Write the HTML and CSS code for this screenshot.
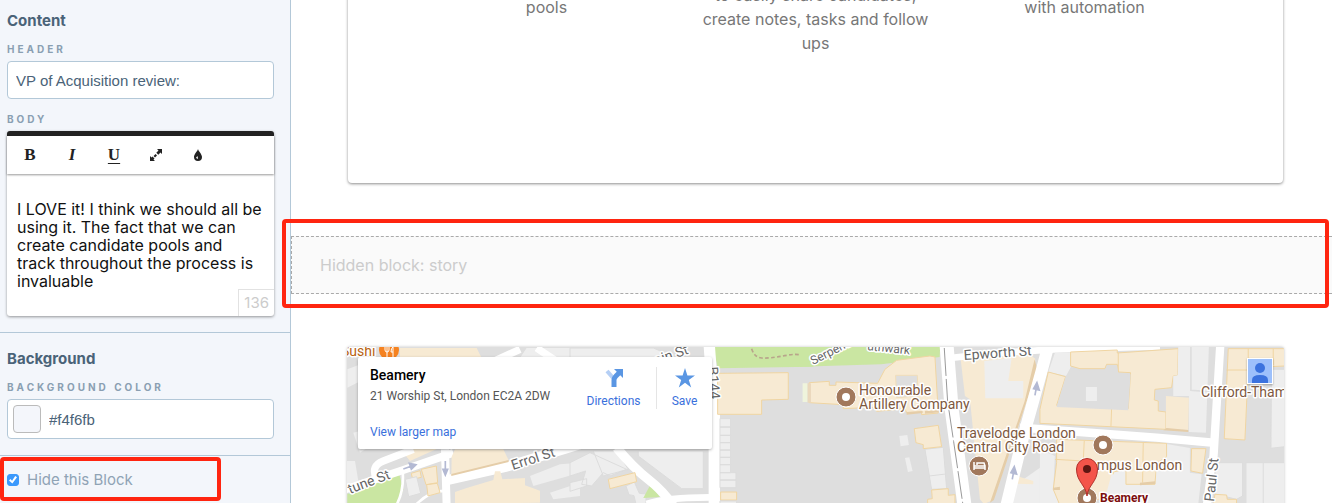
FILE: index.html
```html
<!DOCTYPE html>
<html lang="en">
<head>
    <meta charset="UTF-8">
    <meta name="viewport" content="width=device-width, initial-scale=1.0">
    <title>Page editor</title>
    <link rel="stylesheet" href="styles.css">
</head>
<body>
    <form class="sidebar">
        <section class="panel">
            <h2>Content</h2>
            <label class="field-label" for="header">Header</label>
            <input class="text-input" type="text" id="header" value="VP of Acquisition review:">

            <label class="field-label body-label" for="body">Body</label>
            <div class="editor">
                <div class="toolbar">
                    <button type="button" class="tool bold" aria-label="Bold">B</button>
                    <button type="button" class="tool italic" aria-label="Italic">I</button>
                    <button type="button" class="tool underline" aria-label="Underline">U</button>
                    <button type="button" class="tool" aria-label="Expand">
                        <svg width="14" height="14" viewBox="0 0 14 14">
                            <path d="M8 1h5v5l-1.500-1.500-2.200 2.200-2-2 2.200-2.200z" fill="#222"/>
                            <path d="M6 13H1V8l1.500 1.500 1-1 2 2-1 1z" fill="#222"/>
                            <path d="M5.300 8.700l2-2" stroke="#222" stroke-width="2"/>
                        </svg>
                    </button>
                    <button type="button" class="tool" aria-label="Color">
                        <svg width="14" height="14" viewBox="0 0 14 14">
                            <path d="M7 1c.6 2.500 4 5 4 8.100a4 4 0 0 1-8 0C3 6 6.400 3.500 7 1z" fill="#222"/>
                            <path d="M6.800 8.300v2.700a1.500 1.500 0 0 1-1.500-1.400c0-.5.800-1 1.500-1.300z" fill="#fff"/>
                        </svg>
                    </button>
                </div>
                <textarea class="editor-text" id="body">I LOVE it! I think we should all be using it. The fact that we can create candidate pools and track throughout the process is invaluable</textarea>
                <span class="counter">136</span>
            </div>
        </section>

        <section class="panel">
            <h2>Background</h2>
            <label class="field-label" for="bgcolor">Background color</label>
            <div class="color-input">
                <span class="swatch"></span>
                <input type="text" id="bgcolor" value="#f4f6fb">
            </div>
        </section>

        <section class="hide-row">
            <input type="checkbox" id="hide" checked>
            <label for="hide">Hide this Block</label>
            <div class="highlight highlight-hide"></div>
        </section>
    </form>

    <main class="preview">
        <div class="card">
            <p class="short">pools</p>
            <p>to easily share candidates, create notes, tasks and follow ups</p>
            <p class="short">with automation</p>
        </div>

        <div class="hidden-block">
            Hidden block: story
            <div class="highlight highlight-block"></div>
        </div>

        <div class="map">
            <svg class="map-canvas" width="100%" height="100%">
                <g transform="scale(.3333)">
                    <!-- west side -->
                    <g transform="translate(-21 -33)">
                        <path class="light" d="M22 100l40-15v50l-40 20zM40 290l40-10 10 50-30 20zM560 36h160v30H540zM20 375l25 0 10 60-35 10zM570 420l90-35 60-5v30l-140 40zM630 470l90-30v40l-80 10z"/>
                        <path class="beige" d="M180 36h230l20 40H180zM190 350l60-20h60l-100 45z"/>
                        <path class="park" d="M22 474l155-62 13 48-15 46H22z"/>
                        <path class="road" stroke-width="24" d="M10 462L190 402 340 350M315 340l5 170"/>
                        <path class="road" stroke-width="30" d="M325 432l175-40 230-70"/>
                        <path class="road" stroke-width="22" d="M110 430q-20-40 20-55l90-35M430 90l110-50M590 36l60 40"/>
                        <path class="road" stroke-width="8" d="M188 405q5 60-20 105M230 504q40-40 90-40"/>
                        <path class="beige" d="M335 362l10-22h145l16 33-172 45zM345 504v-36l35-12 80-24 5-26h16l6 24 68-4v22l45 16v36z"/>
                        <path class="beige edge" d="M214 412l26-8 4 20-26 6zM244 400l45-10 4 50-35 6zM260 446l32-4 8 28-36 10z"/>
                        <path class="light edge-light" d="M196 430l34-8 12 50-36 10z"/>
                        <path d="M334 414l172-42v6l-172 42z" fill="#e5cda8"/>
                        <path class="arrow" d="M190 399l25-9M208 382l20 4-14 14zM316 375v25M309 400h14l-7 17z"/>
                    </g>
                    <!-- between the info card and Bunhill Row -->
                    <g transform="translate(669 -33)">
                        <path class="light edge-light" d="M0 380l60-30 110 50-50 20-20-10-35 40-30-5 12-40-47 15zM0 440l50-12v22L0 466zM70 345h70l35 55-75 20zM168 450l25-12 15 34 20 2v30h-30l-6-25-15-3zM205 345h195v113h-65L205 360zM0 36h250l70 30H0z"/>
                        <path class="park" d="M430 30h300v62l-287 5zM242 445l28 38-50 3z"/>
                        <path class="road" stroke-width="28" d="M140 335q50 60 95 95t75 80"/>
                        <path class="road" stroke-width="20" d="M230 504q60-20 190-20"/>
                        <path class="road" stroke-width="34" d="M418 30l15 210v270"/>
                        <path class="beige edge" d="M115 430l80-20 5 27-80 21zM443 112l212-2v80l-80 2v43H443zM452 468h48v24h-48z"/>
                        <path class="light edge-light" d="M450 248h32v25h-32zM450 273h32v25h-32zM450 298h32v22h-32zM450 320h32v22h-32zM450 342h32v22h-32zM450 364h32v22h-32zM450 386h32v24h-32zM450 410h48v22h-48zM450 432h48v23h-48zM450 495h50v15h-50z"/>
                        <path d="M545 38q8 26 30 28t75-8 80 18" fill="none" stroke="#b8a58b" stroke-width="5" stroke-dasharray="11 7"/>
                    </g>
                    <!-- Honourable Artillery Company and City Road -->
                    <g transform="translate(1359 -33)">
                        <path class="park" d="M0 30h421l-2 33-175 22L0 92z"/>
                        <path class="beige edge" d="M28 140l60-4v12h20v-10l125 4 22-42 35-27 100-13 15 3 10 168-50 5v-8l-45 2-5-12-85 8-10-12-90 4v-12l-102-6z"/>
                        <path d="M287 118h65l3 62-65 5z" fill="#dedede" stroke="#f0ddb9" stroke-width="3"/>
                        <path d="M8 142h15v56H8z" fill="#eff4dc"/>
                        <path d="M23 142h10v58H23z" fill="#ead8bc"/>
                        <path d="M320 228l48-3v6l-48 5zM375 225l42-2v6l-42 4z" fill="#e5cda8"/>
                        <path class="light" d="M298 300l24-3 5 30-25 4zM315 366l13-2 10 41-14 3z"/>
                        <path class="light edge-light" d="M375 340l55-6 10 124-45 2zM388 420l50-6"/>
                        <path class="beige edge" d="M343 278l72-10 10 64-55 6v-12l-22-6zM395 462l50-4v20l20-2v30h-82v-16l14-2z"/>
                        <path class="beige" d="M482 68l200-18 24 18-2 60-124 364-28 12-12-14-30-300-15-10z"/>
                        <path class="light" d="M553 75l82-8-10 68 45 0v52H556z"/>
                        <path d="M704 70l8 30-130 392-12 8 104-304z" fill="#e5cda8"/>
                        <path class="light" d="M650 445l70-50v110h-85z"/>
                        <path class="beige" d="M650 420l50 15v10l-55-2z"/>
                        <path class="road" stroke-width="42" d="M440 28l15 190 40 300"/>
                        <path class="road" stroke-width="20" d="M450 66l130-14 180-12 320-9"/>
                        <path class="road" stroke-width="36" d="M745 30l-20 75-60 215-46 190"/>
                        <path d="M433 36l10 160 18 120 28 190" fill="none" stroke="#999" stroke-width="3" stroke-dasharray="84 9"/>
                        <path class="arrow" d="M705 178l4-22M701 158l10-18 7 22zM637 430l4-22M633 410l10-18 7 22z"/>
                    </g>
                    <!-- Paul Street -->
                    <g transform="translate(2079 -33)">
                        <path class="light" d="M45 50h47v45l-12 25-55-12z"/>
                        <path class="beige edge" d="M92 48l140-6v9l183-13-2 80-13 2-5 35-50 5-2 32 12 3v30l23 3v52L0 262v-42l25-112 52 14-27 86 215 10 7-108-37-2-3-23-32 0-5 13h-75l-28-8zM235 50v58M215 218l-2 54"/>
                        <path d="M77 122l15-27 28 8h75l5-13 32 0 3 23 37 2-7 108-215-10z" fill="#dedede"/>
                        <path class="light" d="M138 153h33v42h-33zM415 30h92l-9 260-51-2V180h-47v-60l13-2z"/>
                        <path d="M453 30v133l50 4" fill="none" stroke="#dedede" stroke-width="5"/>
                        <path class="beige" d="M378 180l69 5-2 97-67-4z"/>
                        <path d="M380 276l65 6v6l-75-5z" fill="#e5cda8"/>
                        <path class="light" d="M0 340l45 20-5 100 20 44H0zM200 504l15-100 165-80 70 12v74l35 5-10 90z"/>
                        <path class="beige edge" d="M50 310l330 12v40l-30 20-5 63h-87v-45l-38 8v70l-110 30H60l-20-48 10-80zM133 315l-3 60-85-5M310 320l-2 120"/>
                        <path class="light" d="M215 415h40v35h95v-65l28-20v140H190z"/>
                        <path d="M300 440l46-4v8l-46 4zM40 455l20-3v10H40z" fill="#e5cda8"/>
                        <path class="road" stroke-width="25" d="M-60 275l220 16 190 14 180 16"/>
                        <path class="road" stroke-width="25" d="M541 28l-20 330-20 150"/>
                        <path class="beige edge" d="M565 38h170v52l-110 5-10 217-62-4zM560 102h64M625 38v60M700 38v50M455 338h43l-10 74-35-7z"/>
                        <path class="light edge-light" d="M695 100h40v232l-42 5zM525 380h83v100l-18 10-65-16zM618 380h120v130H618zM670 380v130"/>
                        <path class="beige edge" d="M525 475l35 2 2 13h28v20h-70z"/>
                    </g>
                </g>

                <!-- place labels -->
                <text class="label poi orange" x="-6" y="9">Sushi</text>
                <circle cx="42" cy="3" r="10" fill="#f58220"/>
                <path d="M38 0v3q0 2 2 2v5M40 0v5M42 0v3q0 2-2 2M46 10V0q-2 1-2 5h2" fill="none" stroke="#fff" stroke-width="1"/>
                <text class="label street" x="3" y="147" transform="rotate(-21 3 147)">tune St</text>
                <text class="label street" x="166" y="123" transform="rotate(-18 166 123)">Errol St</text>
                <text class="label street" x="309" y="18" transform="rotate(-19 309 18)">ain St</text>
                <text class="label street" x="361" y="20" transform="rotate(86 361 20)">B144</text>
                <text class="label street small" x="466" y="18" transform="rotate(-27 466 18)">Serpentine</text>
                <text class="label street small" x="520" y="3" transform="rotate(6 520 3)">uthwark</text>
                <text class="label street" x="617" y="13" transform="rotate(-4 617 13)">Epworth St</text>
                <text class="label street" x="867" y="155" transform="rotate(-84 867 155)">Paul St</text>
                <text class="label poi" x="512" y="48">Honourable</text>
                <text class="label poi" x="512" y="62">Artillery Company</text>
                <text class="label poi" x="610" y="91">Travelodge London</text>
                <text class="label poi" x="610" y="105">Central City Road</text>
                <text class="label poi" x="733" y="123">Campus London</text>
                <text class="label poi" x="854" y="50">Clifford-Thames</text>
                <text class="label current" x="753" y="155">Beamery</text>

                <!-- place markers -->
                <g fill="#a1785c" stroke="#fff" stroke-width="1">
                    <circle cx="499" cy="50" r="10"/>
                    <circle cx="632" cy="119" r="10"/>
                    <circle cx="756" cy="98" r="10"/>
                    <circle cx="740" cy="151" r="10"/>
                </g>
                <g fill="#fff">
                    <circle cx="499" cy="50" r="4"/>
                    <circle cx="756" cy="98" r="4"/>
                    <circle cx="740" cy="151" r="4"/>
                </g>
                <path d="M627 115v8M627 121h11v2M627 119h11v2M630 118v-2h7l1 3" fill="none" stroke="#fff" stroke-width="1.500"/>
                <path d="M740 149c-1-11-10.500-14-10.500-27a10.500 10.500 0 0 1 21 0c0 13-9.500 16-10.500 27z" fill="#f4544a" stroke="#b1302a"/>
                <circle cx="740" cy="122" r="4" fill="#5e1612"/>
            </svg>

            <div class="info">
                <div class="place">
                    <h3>Beamery</h3>
                    <p>21 Worship St, London EC2A 2DW</p>
                    <a href="#">View larger map</a>
                </div>
                <a class="action directions" href="#">
                    <svg width="22" height="22" viewBox="0 0 22 22">
                        <path d="M4 4l7 8" stroke="#b5cff5" stroke-width="4"/>
                        <path d="M11 20v-7q0-2 2-4l4-4" fill="none" stroke="#5a96e3" stroke-width="5"/>
                        <path d="M11 2h9v9z" fill="#5a96e3"/>
                    </svg>
                    Directions
                </a>
                <a class="action save" href="#">
                    <svg width="22" height="22" viewBox="0 0 22 22">
                        <path d="M11 1l2.400 7.500H21l-6.200 4.500 2.400 7.500-6.200-4.700-6.200 4.700L7.200 13 1 8.500h7.600z" fill="#5a96e3"/>
                    </svg>
                    Save
                </a>
            </div>

            <button type="button" class="account" aria-label="Account">
                <svg width="24" height="24" viewBox="0 0 24 24">
                    <circle cx="12" cy="9" r="5" fill="#3b72de"/>
                    <path d="M4 24v-3q0-5 8-5t8 5v3z" fill="#3b72de"/>
                </svg>
            </button>
        </div>
    </main>
</body>
</html>
```

FILE: styles.css
```css
* {
    box-sizing: border-box;
}
body {
    display: flex;
    height: 100vh;
    margin: 0;
    overflow: hidden;
    font-family: Inter, sans-serif;
    background-color: #fff;
}
h2, h3, p {
    margin: 0;
}
button {
    padding: 0;
    border: none;
    background: none;
    cursor: pointer;
}

/* sidebar */
.sidebar {
    flex: 0 0 291px;
    background-color: #f3f6fb;
    border-right: 1px solid #b3c8d8;
}
.panel {
    padding: 12px 16px 16px 7px;
    border-bottom: 1px solid #b3c8d8;
}
.panel + .panel {
    padding-top: 17px;
}
.panel h2 {
    margin-bottom: 12px;
    font-size: 15px;
    line-height: 18px;
    font-weight: 700;
    color: #4a6378;
}
.field-label {
    display: block;
    margin-bottom: 5px;
    font-size: 10px;
    line-height: 14px;
    font-weight: 700;
    letter-spacing: 3px;
    text-transform: uppercase;
    color: #8a9fb2;
}
.body-label {
    margin-top: 13px;
}
.text-input, .color-input {
    width: 100%;
    height: 38px;
    padding: 0 8px;
    border: 1px solid #b3c8d8;
    border-radius: 4px;
    background-color: #fff;
}
.text-input, .color-input input {
    font-family: "Liberation Sans", Arial, sans-serif;
    font-size: 15px;
    color: #4a6378;
}
.color-input {
    display: flex;
    align-items: center;
    gap: 8px;
    height: 40px;
    padding: 0 5px;
}
.color-input input {
    flex: 1;
    min-width: 0;
    padding: 0;
    border: none;
}
.swatch {
    width: 28px;
    height: 28px;
    border: 1px solid #bbb;
    border-radius: 4px;
    background-color: #f4f6fb;
}

.editor {
    position: relative;
    border-top: 5px solid #222;
    border-radius: 3px;
    background-color: #fff;
    box-shadow: 0 1px 3px rgba(0, 0, 0, 0.4);
}
.toolbar {
    display: flex;
    padding: 0 2px;
    height: 38px;
    box-shadow: 0 1px 2px rgba(0, 0, 0, 0.4);
}
.tool {
    display: flex;
    align-items: center;
    justify-content: center;
    width: 42px;
    font-family: "Liberation Serif", serif;
    font-size: 17px;
    font-weight: bold;
    color: #222;
}
.italic {
    font-style: italic;
}
.underline {
    text-decoration: underline;
    text-decoration-thickness: 1px;
    text-underline-offset: 3px;
}
.editor-text {
    display: block;
    width: 100%;
    height: 142px;
    padding: 26px 11px 0 10px;
    border: none;
    background: none;
    resize: none;
    overflow: hidden;
    font-family: Inter, sans-serif;
    font-size: 16px;
    line-height: 18px;
    color: #111;
}
.counter {
    position: absolute;
    right: 0;
    bottom: 0;
    padding: 4px 5px;
    border-top: 1px solid #e2e2e2;
    border-left: 1px solid #e2e2e2;
    font-size: 15px;
    line-height: 18px;
    color: #ccc;
}

.hide-row {
    position: relative;
    display: flex;
    align-items: center;
    gap: 8px;
    padding: 15px 7px;
    font-size: 15px;
    line-height: 18px;
    color: #8fa3b5;
}
.hide-row input {
    display: grid;
    place-items: center;
    width: 12px;
    height: 12px;
    margin: 0;
    appearance: none;
    border: 1px solid #3b99fc;
    border-radius: 3px;
    background-color: #fff;
}
.hide-row input:checked {
    background-color: #3b99fc;
}
.hide-row input:checked::before {
    content: "";
    width: 8px;
    height: 8px;
    background-color: #fff;
    clip-path: polygon(0 55%, 18% 38%, 38% 60%, 78% 0, 100% 15%, 42% 95%);
}

/* red call-outs */
.highlight {
    position: absolute;
    border: 4px solid #ff2510;
    border-radius: 4px;
    pointer-events: none;
}
.highlight-hide {
    top: 1px;
    left: 0;
    width: 221px;
    height: 44px;
}
.highlight-block {
    top: -18px;
    right: 3px;
    bottom: -15px;
    left: -10px;
}

/* preview */
.preview {
    flex: 1;
    min-width: 0;
}
.card {
    display: grid;
    grid-template-columns: repeat(3, 1fr);
    align-items: center;
    margin: -17px 49px 53px 57px;
    padding: 0 64px 128px;
    border-radius: 4px;
    box-shadow: 0 1px 3px rgba(0, 0, 0, 0.45);
    font-size: 16px;
    line-height: 24px;
    text-align: center;
    color: #777;
}
.card p {
    padding: 0 16px;
}
.card .short {
    padding-bottom: 24px;
}
.hidden-block {
    position: relative;
    margin-bottom: 53px;
    padding: 18px 28px;
    border: 1px dashed #aaa;
    border-right: none;
    background-color: #fafafa;
    font-size: 16px;
    line-height: 20px;
    color: #ccc;
}

/* map */
.map {
    position: relative;
    height: 200px;
    margin: 0 48px 0 56px;
    overflow: hidden;
    border-radius: 3px;
    background-color: #dedede;
    box-shadow: 0 0 3px rgba(0, 0, 0, 0.25);
    font-family: Roboto, sans-serif;
}
.map-canvas {
    display: block;
}
.light {
    fill: #eee;
}
.beige {
    fill: #f7ead3;
}
.edge {
    stroke: #f0d5a2;
    stroke-width: 3;
}
.edge-light {
    stroke: #dcdcdc;
    stroke-width: 3;
}
.park {
    fill: #cae6a2;
}
.road {
    fill: none;
    stroke: #fff;
}
.arrow {
    fill: #b3b9d3;
    stroke: #b3b9d3;
    stroke-width: 5;
}
.label {
    font-size: 14px;
    stroke: #fff;
    stroke-width: 3px;
    stroke-linejoin: round;
    paint-order: stroke;
}
.poi {
    fill: #7d5840;
}
.orange {
    fill: #b8620f;
}
.street {
    fill: #666;
}
.small {
    font-size: 12px;
}
.current {
    font-size: 12px;
    font-weight: bold;
    fill: #7c0d0d;
}

.info {
    position: absolute;
    top: 10px;
    left: 11px;
    display: flex;
    width: 354px;
    height: 92px;
    padding: 10px 0 0 12px;
    border-radius: 2px;
    background-color: #fff;
    box-shadow: 0 1px 3px rgba(0, 0, 0, 0.3);
    font-size: 12px;
    line-height: 16px;
}
.info a {
    color: #3a70dc;
    text-decoration: none;
}
.place {
    flex: 1;
    color: #555;
}
.place h3 {
    margin-bottom: 5px;
    font-size: 14px;
    line-height: 16px;
    font-weight: 500;
    color: #000;
}
.place p {
    margin-bottom: 20px;
}
.action {
    display: flex;
    flex-direction: column;
    align-items: center;
    gap: 4px;
    height: 42px;
}
.directions {
    width: 85px;
}
.save {
    width: 56px;
    border-left: 1px solid #e5e5e5;
}
.account {
    position: absolute;
    top: 11px;
    right: 11px;
    width: 26px;
    height: 26px;
    border: 1px solid #fff;
    background-color: #9dc0fb;
    box-shadow: 0 1px 2px rgba(0, 0, 0, 0.3);
}
.account svg {
    display: block;
}
```
